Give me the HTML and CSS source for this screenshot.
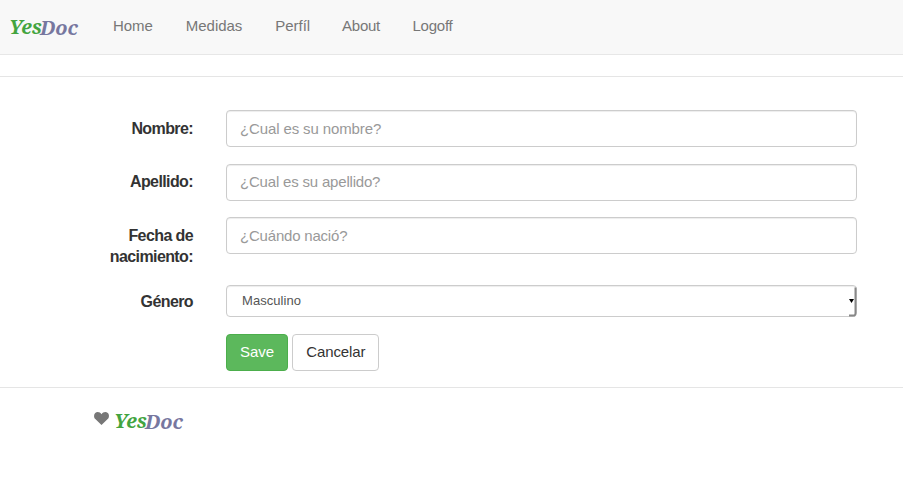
FILE: index.html
```html
<!DOCTYPE html>
<html lang="es">
<head>
<meta charset="utf-8">
<title>YesDoc</title>
<link rel="stylesheet" href="styles.css">
</head>
<body>
<nav class="navbar">
  <a class="brand"><svg class="logo" width="70" height="24" viewBox="0 0 70 24"><text class="yes" x="-1" y="17" textLength="33" lengthAdjust="spacingAndGlyphs">Yes</text><text class="doc" x="30" y="18" textLength="38" lengthAdjust="spacingAndGlyphs">Doc</text></svg></a>
  <a class="link">Home</a>
  <a class="link">Medidas</a>
  <a class="link">Perfíl</a>
  <a class="link tight">About</a>
  <a class="link tight">Logoff</a>
</nav>
<main>
  <form class="form">
    <div class="row"><label for="nombre">Nombre:</label><input id="nombre" type="text" placeholder="¿Cual es su nombre?"></div>
    <div class="row raised"><label for="apellido">Apellido:</label><input id="apellido" type="text" placeholder="¿Cual es su apellido?"></div>
    <div class="row date"><label for="fecha">Fecha de nacimiento:</label><input id="fecha" type="text" placeholder="¿Cuándo nació?"></div>
    <div class="row gender"><label>Género</label><div class="select"><span>Masculino</span><svg class="arrow" width="9" height="32" viewBox="0 0 9 32"><path d="M1 14h5l-2.5 4z" fill="#000"/><path d="M1 30.5h5.5Q7.5 30 7.5 28V2.5" fill="none" stroke="#888" stroke-width="2"/></svg></div></div>
    <div class="actions"><button type="button" class="btn save">Save</button><button type="button" class="btn">Cancelar</button></div>
  </form>
</main>
<footer class="footer">
  <svg class="heart" width="15" height="13" viewBox="0 0 15 13"><path d="M7.5 13L1.3 7C-.4 5.3-.3 2.4 1.2 1 3-.6 6-.3 7.5 2.3 9-.3 12-.6 13.8 1c1.5 1.4 1.6 4.3-.1 6z"/></svg>
  <svg class="logo" width="70" height="24" viewBox="0 0 70 24"><text class="yes" x="-1" y="17" textLength="33" lengthAdjust="spacingAndGlyphs">Yes</text><text class="doc" x="30" y="18" textLength="38" lengthAdjust="spacingAndGlyphs">Doc</text></svg>
</footer>
</body>
</html>
```
FILE: styles.css
```css
* { box-sizing: border-box; }
body {
  margin: 0;
  background: #fff;
  color: #333;
  font: 15px/21px "Liberation Sans", Arial, sans-serif;
}
.navbar {
  display: flex;
  height: 55px;
  padding: 15px 0 0 10px;
  background: #f8f8f8;
  border-bottom: 1px solid #e7e7e7;
}
.brand { width: 86.5px; padding-top: 2px; }
.logo { display: block; overflow: visible; }
.logo text {
  font: italic bold 20px "Noto Serif", "DejaVu Serif", serif;
}
.yes { fill: #43a43f; }
.doc { fill: #77779f; }
.link { padding: 0 16.5px; color: #777; letter-spacing: -.04px; }
.link.tight { margin-left: -1px; padding-right: 17px; letter-spacing: -.25px; }
main {
  margin-top: 21px;
  padding: 33px 46px 16px 0;
  border-top: 1px solid #e5e5e5;
  border-bottom: 1px solid #e5e5e5;
}
.form { display: flex; flex-direction: column; gap: 17px; }
.row { display: flex; align-items: flex-start; }
.row label {
  width: 193px;
  margin-right: 33px;
  padding: 8px 0 0 95px;
  text-align: right;
  font-size: 16px;
  font-weight: bold;
  letter-spacing: -.6px;
}
.row.raised label { padding-top: 7px; }
.row.gender label { padding-top: 6px; }
.date { height: 51px; margin-top: -1px; }
input, .select {
  flex: 1;
  height: 37px;
  padding: 6px 13px;
  border: 1px solid #ccc;
  border-radius: 4px;
  background: #fff;
  box-shadow: inset 0 1px 1px rgba(0, 0, 0, .075);
  font: inherit;
  letter-spacing: -.12px;
}
.raised input { padding-bottom: 8px; letter-spacing: -.19px; }
.date input { letter-spacing: -.2px; }
input::placeholder { color: #999; opacity: 1; }
.select {
  display: flex;
  justify-content: space-between;
  height: 32px;
  padding: 0 0 0 15px;
  color: #555;
  font-size: 13px;
  line-height: 30px;
  letter-spacing: .05px;
}
.gender { height: 32px; }
.arrow { margin: -1px -1px 0 0; }
.actions { display: flex; gap: 4px; padding-left: 226px; }
.btn {
  height: 37px;
  padding: 0 13px 2px;
  border: 1px solid #ccc;
  border-radius: 4px;
  background: #fff;
  color: #333;
  font: inherit;
  letter-spacing: -.1px;
}
.save { border-color: #4cae4c; background: #5cb85c; color: #fff; letter-spacing: 0; }
.footer { display: flex; padding: 23px 0 0 94px; }
.heart { margin: 1px 6px 0 0; fill: #777; }
```
